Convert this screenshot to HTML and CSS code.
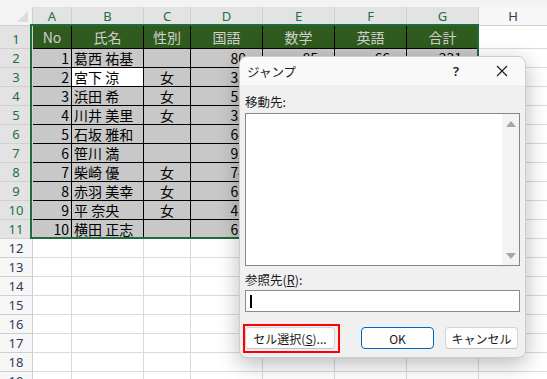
FILE: index.html
```html
<!DOCTYPE html>
<html lang="ja">
<head>
    <meta charset="UTF-8">
    <title>ジャンプ</title>
    <link rel="stylesheet" href="styles.css">
</head>
<body>
    <div class="app">
        <div class="ribbon-edge"></div>

        <div class="sheet">
            <div class="corner"></div>
            <div class="ch sel">A</div><div class="ch sel">B</div><div class="ch sel">C</div><div class="ch sel">D</div><div class="ch sel">E</div><div class="ch sel">F</div><div class="ch sel">G</div><div class="ch">H</div>

            <div class="rh sel top">1</div>
            <div class="hd">No</div><div class="hd">氏名</div><div class="hd">性別</div><div class="hd">国語</div><div class="hd">数学</div><div class="hd">英語</div><div class="hd">合計</div><div></div>

            <div class="rh sel">2</div>
            <div class="d num">1</div><div class="d">葛西 祐基</div><div class="d ctr"></div><div class="d score">80</div><div class="d score">85</div><div class="d score">66</div><div class="d score">231</div><div></div>

            <div class="rh sel">3</div>
            <div class="d num">2</div><div class="d active">宮下 涼</div><div class="d ctr">女</div><div class="d score">35</div><div class="d score">72</div><div class="d score">81</div><div class="d score">188</div><div></div>

            <div class="rh sel">4</div>
            <div class="d num">3</div><div class="d">浜田 希</div><div class="d ctr">女</div><div class="d score">58</div><div class="d score">64</div><div class="d score">70</div><div class="d score">192</div><div></div>

            <div class="rh sel">5</div>
            <div class="d num">4</div><div class="d">川井 美里</div><div class="d ctr">女</div><div class="d score">32</div><div class="d score">48</div><div class="d score">77</div><div class="d score">157</div><div></div>

            <div class="rh sel">6</div>
            <div class="d num">5</div><div class="d">石坂 雅和</div><div class="d ctr"></div><div class="d score">64</div><div class="d score">91</div><div class="d score">55</div><div class="d score">210</div><div></div>

            <div class="rh sel">7</div>
            <div class="d num">6</div><div class="d">笹川 満</div><div class="d ctr"></div><div class="d score">92</div><div class="d score">88</div><div class="d score">73</div><div class="d score">253</div><div></div>

            <div class="rh sel">8</div>
            <div class="d num">7</div><div class="d">柴崎 優</div><div class="d ctr">女</div><div class="d score">74</div><div class="d score">59</div><div class="d score">84</div><div class="d score">217</div><div></div>

            <div class="rh sel">9</div>
            <div class="d num">8</div><div class="d">赤羽 美幸</div><div class="d ctr">女</div><div class="d score">68</div><div class="d score">62</div><div class="d score">90</div><div class="d score">220</div><div></div>

            <div class="rh sel">10</div>
            <div class="d num">9</div><div class="d">平 奈央</div><div class="d ctr">女</div><div class="d score">45</div><div class="d score">53</div><div class="d score">67</div><div class="d score">165</div><div></div>

            <div class="rh sel">11</div>
            <div class="d num">10</div><div class="d">横田 正志</div><div class="d ctr"></div><div class="d score">61</div><div class="d score">76</div><div class="d score">58</div><div class="d score">195</div><div></div>

            <div class="rh">12</div><div></div><div></div><div></div><div></div><div></div><div></div><div></div><div></div>
            <div class="rh">13</div><div></div><div></div><div></div><div></div><div></div><div></div><div></div><div></div>
            <div class="rh">14</div><div></div><div></div><div></div><div></div><div></div><div></div><div></div><div></div>
            <div class="rh">15</div><div></div><div></div><div></div><div></div><div></div><div></div><div></div><div></div>
            <div class="rh">16</div><div></div><div></div><div></div><div></div><div></div><div></div><div></div><div></div>
            <div class="rh">17</div><div></div><div></div><div></div><div></div><div></div><div></div><div></div><div></div>
            <div class="rh">18</div><div></div><div></div><div></div><div></div><div></div><div></div><div></div><div></div>
            <div class="rh">19</div><div></div><div></div><div></div><div></div><div></div><div></div><div></div><div></div>
        </div>

        <!-- 選択範囲 A1:G11 -->
        <div class="selection"></div>

        <div class="dialog">
            <div class="dlg-title">
                <span class="dlg-caption">ジャンプ</span>
                <span class="dlg-help">?</span>
                <span class="dlg-close">
                    <svg width="12" height="12" viewBox="0 0 12 12"><path d="M1 1 L11 11 M11 1 L1 11" stroke="#1a1a1a" stroke-width="1.1" fill="none"/></svg>
                </span>
            </div>
            <div class="dlg-body">
                <div class="dlg-label">移動先:</div>
                <div class="listbox">
                    <div class="list-area"></div>
                    <div class="scrollbar">
                        <span class="arrow up"></span>
                        <span class="arrow down"></span>
                    </div>
                </div>
                <div class="dlg-label second">参照先(<u>R</u>):</div>
                <div class="textbox"><span class="caret"></span></div>
                <div class="dlg-buttons">
                    <button class="btn btn-wide marked">セル選択(<u>S</u>)...</button>
                    <button class="btn btn-primary">OK</button>
                    <button class="btn">キャンセル</button>
                </div>
            </div>
        </div>
    </div>
</body>
</html>
```

FILE: styles.css
```css
* {
    margin: 0;
    padding: 0;
    box-sizing: border-box;
}

body {
    background: #fff;
    font-family: "Noto Sans CJK JP", "Noto Sans", sans-serif;
    color: #000;
}

.app {
    position: relative;
    width: 547px;
    height: 379px;
    overflow: hidden;
}

.ribbon-edge {
    height: 7px;
    background: #f3f3f3;
}

/* シート */
.sheet {
    display: grid;
    grid-template-columns: 33px 39px 72px 47px 72px 72px 72px 72px 69px;
    grid-template-rows: 19px 23px repeat(18, 19px);
}

.sheet > div {
    border-right: 1px solid #dadada;
    border-bottom: 1px solid #dadada;
    font-size: 14px;
    line-height: 19px;
    padding: 0 2px;
    white-space: nowrap;
    overflow: hidden;
}

.sheet > .corner {
    background: #f3f3f3;
    border-color: #cfcfcf;
    position: relative;
}

.sheet > .corner::after {
    content: "";
    position: absolute;
    right: 4px;
    bottom: 3px;
    border-left: 11px solid transparent;
    border-bottom: 11px solid #dcdcdc;
}

.sheet > .ch,
.sheet > .rh {
    background: #f7f7f7;
    border-color: #d0d0d0;
    color: #2c3e5c;
    font-family: "Noto Sans", sans-serif;
    font-size: 13px;
    text-align: center;
    line-height: 18px;
}

.sheet > .ch.sel,
.sheet > .rh.sel {
    background: #e3e3e3;
    color: #1f6e43;
}

.sheet > .rh.top {
    line-height: 26px;
}

.sheet > .hd {
    background: #2f5b1e;
    color: #cfcfcf;
    border-color: #000;
    text-align: center;
    line-height: 22px;
}

.sheet > .d {
    background: #c8c8c8;
    border-color: #000;
}

.sheet > .num {
    text-align: right;
}

.sheet > .score {
    text-align: right;
    padding-right: 16px;
}

.sheet > .ctr {
    text-align: center;
}

.sheet > .active {
    background: #fff;
}

.selection {
    position: absolute;
    left: 30px;
    top: 24px;
    width: 449px;
    height: 215px;
    border: 2px solid #1e6b3c;
    pointer-events: none;
}

/* ダイアログ */
.dialog {
    position: absolute;
    left: 239px;
    top: 56px;
    width: 287px;
    height: 302px;
    background: #f0f0f0;
    border-radius: 8px;
    border: 1px solid #cdcdcd;
    box-shadow: 0 6px 22px rgba(0, 0, 0, 0.28);
    overflow: hidden;
    font-size: 12px;
    color: #1a1a1a;
}

.dlg-title {
    display: flex;
    align-items: center;
    height: 28px;
    background: #f9f9f9;
}

.dlg-caption {
    flex: 1;
    padding-left: 7px;
    font-size: 12.5px;
}

.dlg-help,
.dlg-close {
    width: 46px;
    text-align: center;
    font-family: "Noto Sans", sans-serif;
    font-size: 13px;
}

.dlg-help {
    font-weight: 600;
}

.dlg-close {
    display: flex;
    justify-content: center;
}

.dlg-body {
    padding: 0 5px;
}

.dlg-label {
    height: 28px;
    padding-top: 8px;
    line-height: 18px;
    font-size: 12.5px;
}

.dlg-label.second {
    height: 24px;
    padding-top: 5px;
}

.listbox {
    display: flex;
    height: 153px;
    border: 1px solid #868686;
    background: #fff;
}

.list-area {
    flex: 1;
}

.scrollbar {
    width: 17px;
    background: #f3f3f3;
    display: flex;
    flex-direction: column;
    justify-content: space-between;
    align-items: center;
    padding: 7px 0 6px;
}

.arrow {
    width: 0;
    height: 0;
    border-left: 5px solid transparent;
    border-right: 5px solid transparent;
}

.arrow.up {
    border-bottom: 6px solid #a6a6a6;
}

.arrow.down {
    border-top: 6px solid #a6a6a6;
}

.textbox {
    height: 22px;
    border: 1px solid #8c8c8c;
    background: #fff;
    padding: 4px 0 0 4px;
}

.caret {
    display: block;
    width: 2px;
    height: 13px;
    background: #000;
}

.dlg-buttons {
    display: flex;
    margin-top: 15px;
}

.btn {
    height: 22px;
    width: 73px;
    background: #fdfdfd;
    border: 1px solid #d3d3d3;
    border-bottom-color: #c2c2c2;
    border-radius: 4px;
    font-family: "Noto Sans CJK JP", "Noto Sans", sans-serif;
    font-size: 12px;
    color: #1a1a1a;
}

.btn-wide {
    width: 90px;
    margin-right: 26px;
}

.btn-primary {
    border-color: #0067c0;
    margin-right: 11px;
}

/* 赤枠の注釈 */
.marked {
    position: relative;
}

.marked::after {
    content: "";
    position: absolute;
    left: -3px;
    top: -4px;
    right: -6px;
    bottom: -5px;
    border: 2px solid #f00;
}
```
